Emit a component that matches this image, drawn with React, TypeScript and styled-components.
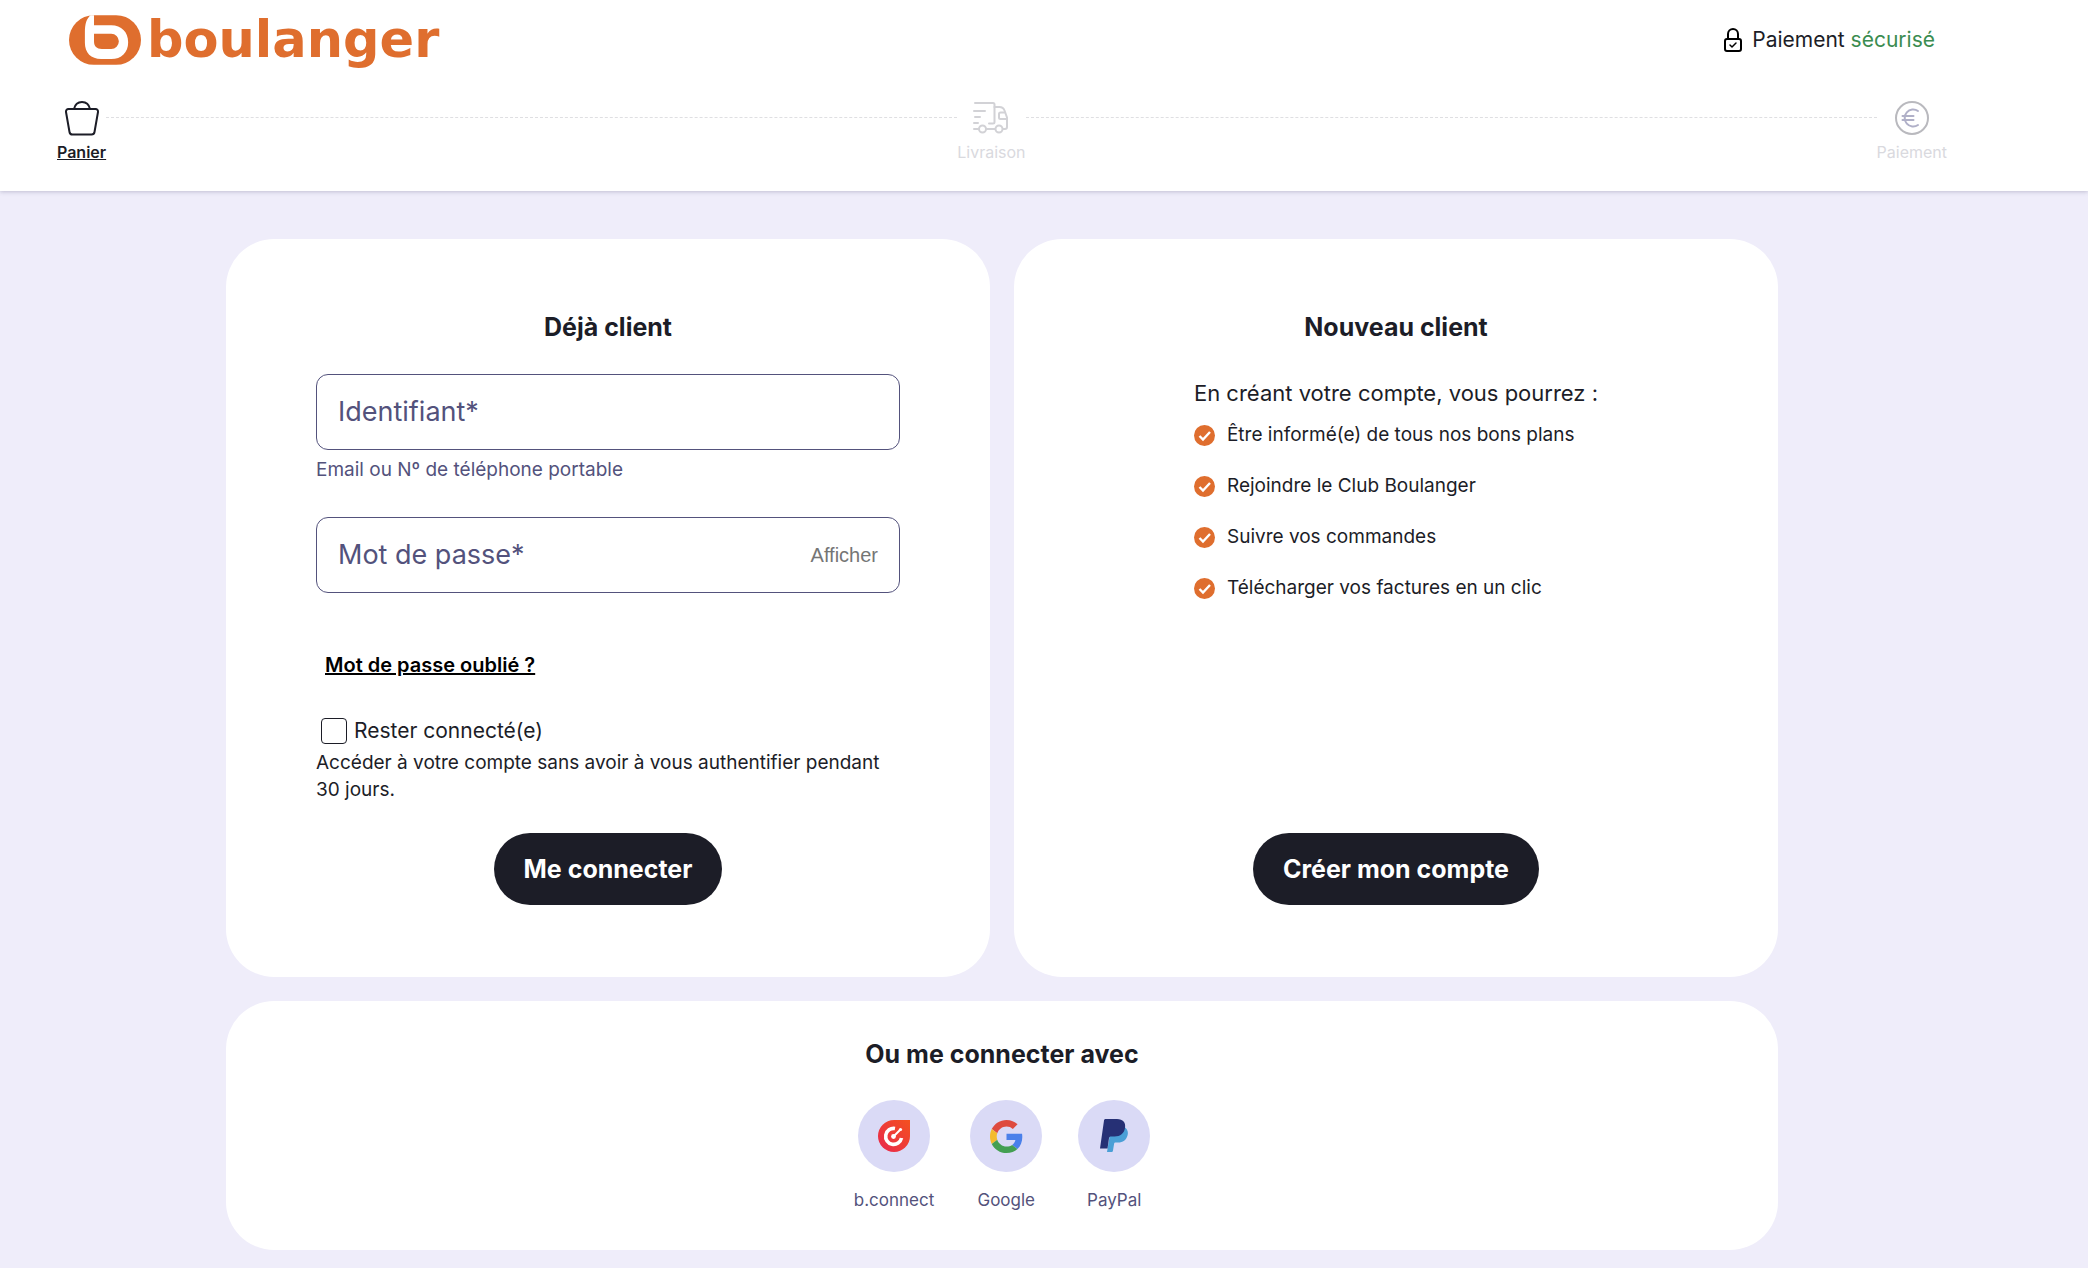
import React, { useState } from "react";
import styled, { createGlobalStyle } from "styled-components";

const ink = "#1c1d27";
const muted = "#53527c";
const orange = "#df6e2e";
const lilac = "#efedfa";

const GlobalStyle = createGlobalStyle`
  * { box-sizing: border-box; }
  body {
    margin: 0;
    background: ${lilac};
    color: ${ink};
    font-family: Inter, "Noto Sans", sans-serif;
  }
  h1, h2, p, ul, ol { margin: 0; padding: 0; }
  button, input { font-family: inherit; }
`;

const Page = styled.div`
  min-height: 100vh;
  padding-bottom: 16px;
`;

const Header = styled.header`
  background: #fff;
  padding-right: 84px;
  box-shadow: 0 1px 4px rgba(60, 55, 100, 0.25);
`;

const TopBar = styled.div`
  display: flex;
  justify-content: space-between;
  align-items: center;
  height: 80px;
  padding: 0 69px;
`;

const Logo = styled.a`
  display: flex;
  align-items: center;
  gap: 6px;
  color: ${orange};
  text-decoration: none;
`;

const Wordmark = styled.span`
  font: bold 51px/56px "DejaVu Sans", sans-serif;
`;

const Secure = styled.p`
  display: flex;
  align-items: center;
  gap: 10px;
  font-size: 21px;
  line-height: 24px;
`;

const Green = styled.span`
  color: #3b8c50;
`;

const Steps = styled.ol`
  display: flex;
  height: 111px;
  padding: 20px 57px 0;
  list-style: none;
`;

const Step = styled.li<{ $last?: boolean }>`
  display: flex;
  flex: ${(p) => (p.$last ? "none" : "1 1 auto")};
`;

const StepLink = styled.a<{ $active?: boolean }>`
  display: flex;
  flex-direction: column;
  align-items: center;
  gap: 6px;
  font-size: 16px;
  line-height: 20px;
  font-weight: ${(p) => (p.$active ? 600 : 400)};
  color: ${(p) => (p.$active ? ink : "#d9d9de")};
  text-decoration: ${(p) => (p.$active ? "underline" : "none")};
`;

const StepLine = styled.span`
  flex: 1;
  height: 18px;
  border-bottom: 1px dashed #dfdfe2;
`;

const Main = styled.main`
  padding: 48px 84px 0 0;
`;

const Cards = styled.div`
  display: grid;
  grid-template-columns: 1fr 1fr;
  gap: 24px;
  max-width: 1552px;
  margin: 0 auto;
`;

const Card = styled.section<{ $wide?: boolean }>`
  display: flex;
  flex-direction: column;
  align-items: center;
  grid-column: ${(p) => (p.$wide ? "1 / -1" : "auto")};
  padding: ${(p) => (p.$wide ? "37px 90px 38px" : "72px 90px")};
  border-radius: 48px;
  background: #fff;
`;

const Title = styled.h2`
  font-size: 25px;
  line-height: 32px;
  font-weight: 700;
`;

const Form = styled.form`
  display: flex;
  flex-direction: column;
  width: 100%;
  flex: 1;
`;

const Field = styled.div`
  display: flex;
  align-items: center;
  height: 76px;
  margin-top: 31px;
  padding: 0 21px;
  border: 1px solid ${muted};
  border-radius: 12px;
`;

const FieldInput = styled.input`
  flex: 1;
  min-width: 0;
  padding: 0;
  border: 0;
  outline: 0;
  background: none;
  color: ${ink};
  font-size: 27px;
  line-height: 32px;
  &::placeholder { color: ${muted}; opacity: 1; }
`;

const ShowButton = styled.button`
  padding: 0;
  border: 0;
  background: none;
  color: #757575;
  font: 20px/24px "Liberation Sans", Arial, sans-serif;
`;

const Hint = styled.label`
  margin-top: 6px;
  padding-bottom: 2px;
  color: ${muted};
  font-size: 19px;
  line-height: 28px;
`;

const Forgot = styled.a`
  align-self: flex-start;
  margin: 60px 0 0 9px;
  color: #000;
  font-size: 20px;
  line-height: 24px;
  font-weight: 600;
`;

const Remember = styled.label`
  display: flex;
  align-items: center;
  gap: 7px;
  margin: 40px 0 0 5px;
  font-size: 21px;
  line-height: 28px;
`;

const Box = styled.input`
  appearance: none;
  width: 26px;
  height: 26px;
  margin: 0;
  border: 1px solid ${ink};
  border-radius: 4px;
  background: #fff;
  &:checked { background: ${ink}; }
`;

const Note = styled.p`
  margin: 4px 0 30px;
  font-size: 19px;
  line-height: 27px;
`;

const Pill = styled.button`
  align-self: center;
  height: 72px;
  margin-top: auto;
  padding: 0 30px;
  border: 0;
  border-radius: 36px;
  background: ${ink};
  color: #fff;
  font-size: 25px;
  line-height: 32px;
  font-weight: 700;
`;

const Benefits = styled.div`
  margin-top: 34px;
`;

const Lead = styled.p`
  font-size: 22px;
  line-height: 32px;
`;

const List = styled.ul`
  list-style: none;
`;

const Item = styled.li`
  display: flex;
  align-items: center;
  gap: 12px;
  margin-top: 14px;
  font-size: 19px;
  line-height: 24px;
  & + & { margin-top: 27px; }
`;

const Providers = styled.div`
  display: flex;
  gap: 36px;
  margin-top: 30px;
`;

const Provider = styled.button`
  display: flex;
  flex-direction: column;
  align-items: center;
  gap: 16px;
  min-width: 72px;
  padding: 0;
  border: 0;
  background: none;
  color: ${muted};
  font-size: 17px;
  line-height: 24px;
`;

const Disc = styled.span`
  display: grid;
  place-items: center;
  width: 72px;
  height: 72px;
  border-radius: 50%;
  background: #dadaf6;
`;

const Emblem = () => (
  <svg width="72" height="50" viewBox="0 0 213 147" aria-hidden="true">
    <rect width="213" height="147" rx="73.500" fill={orange} />
    <path d="M64 0H74V30H125C155 30 175 50 175 80C175 110 155 130 125 130H95C65 130 47 112 47 82V50C47 25 52 10 64 0Z" fill="#fff" />
    <path d="M74 55H125A22 22 0 0 1 125 100H97C82 100 74 92 74 78Z" fill={orange} />
  </svg>
);

const Lock = () => (
  <svg width="18" height="24" viewBox="0 0 18 24" fill="none" stroke="#000" strokeWidth="2" strokeLinecap="round" strokeLinejoin="round" aria-hidden="true">
    <path d="M4 11V6a5 5 0 0 1 10 0v5" />
    <rect x="1" y="11" width="16" height="12" rx="2" />
    <path d="M6 17l2 2 4-4" strokeWidth="1.500" />
  </svg>
);

const Basket = () => (
  <svg width="36" height="36" viewBox="0 0 36 36" fill="none" stroke={ink} strokeWidth="2" strokeLinejoin="round" aria-hidden="true">
    <path d="M4.500 9h27a2.500 2.500 0 0 1 2.500 3l-3.500 20a3 3 0 0 1-3 2.500h-19a3 3 0 0 1-3-2.500L2 12a2.500 2.500 0 0 1 2.500-3Z" />
    <path d="M10 9c1-4.500 4-7 8-7s7 2.500 8 7" />
  </svg>
);

const Truck = () => (
  <svg width="36" height="36" viewBox="0 0 36 36" fill="none" stroke="#d2d2d6" strokeWidth="2" strokeLinecap="round" strokeLinejoin="round" aria-hidden="true">
    <path d="M2 3h18a1.500 1.500 0 0 1 1.500 1.500V22a1.500 1.500 0 0 1-1.500 1.500h-4" />
    <path d="M1 11h11M2 17h5M1 23h4M1 29h5M13 29h9" />
    <path d="M21.500 7h5c2.500 0 4 1 5 3.500l2.500 7V27a2 2 0 0 1-2 2h-2" />
    <path d="M33 19h-5.500a1.500 1.500 0 0 1-1.500-1.500V14a1.500 1.500 0 0 1 1.500-1.500h4" />
    <circle cx="9.500" cy="29" r="3.500" />
    <circle cx="26" cy="29" r="3.500" />
  </svg>
);

const Euro = () => (
  <svg width="36" height="36" viewBox="0 0 36 36" fill="none" stroke="#b0b0c8" strokeWidth="2" strokeLinecap="round" aria-hidden="true">
    <circle cx="18" cy="18" r="16" stroke="#b9b9be" />
    <path d="M24 11a8.500 8.500 0 1 0 0 14M8.500 16h11M8.500 20h11" />
  </svg>
);

const Check = () => (
  <svg width="21" height="21" viewBox="0 0 21 21" fill="none" aria-hidden="true">
    <circle cx="10.500" cy="10.500" r="10.500" fill={orange} />
    <path d="M5.500 11l3.500 3.500 7-7.500" stroke="#fff" strokeWidth="2.400" />
  </svg>
);

const BConnect = () => (
  <svg width="32" height="32" viewBox="0 0 32 32" fill="none" aria-hidden="true">
    <defs>
      <linearGradient id="bc" x1="0" y1="1" x2="1" y2="0">
        <stop offset="0" stopColor="#e8274f" />
        <stop offset="1" stopColor="#f4511e" />
      </linearGradient>
    </defs>
    <path d="M16 0H32V16A16 16 0 1 1 16 0Z" fill="url(#bc)" />
    <path d="M17 8.500A8 8 0 1 0 23.500 18" stroke="#fff" strokeWidth="3.600" />
    <path d="M15.500 16.500L22.500 9.500" stroke="#fff" strokeWidth="2" />
    <circle cx="15.500" cy="16.500" r="2.400" fill="#fff" />
    <circle cx="22.500" cy="9.500" r="1.600" fill="#fff" />
  </svg>
);

const Google = () => (
  <svg width="33" height="33" viewBox="0 0 48 48" aria-hidden="true">
    <path fill="#de4b3f" d="M24 9.500c3.540 0 6.710 1.220 9.210 3.600l6.850-6.850C35.900 2.380 30.470 0 24 0 14.620 0 6.510 5.380 2.560 13.220l7.980 6.190C12.430 13.720 17.740 9.500 24 9.500z" />
    <path fill="#4a80ea" d="M46.980 24.550c0-1.570-.15-3.090-.38-4.550H24v9.020h12.940c-.58 2.960-2.260 5.480-4.780 7.180l7.730 6c4.510-4.180 7.090-10.360 7.090-17.650z" />
    <path fill="#f4bb2c" d="M10.530 28.590c-.48-1.450-.76-2.990-.76-4.590s.27-3.140.76-4.590l-7.980-6.190C.92 16.460 0 20.120 0 24c0 3.880.92 7.540 2.560 10.780l7.970-6.190z" />
    <path fill="#439f52" d="M24 48c6.480 0 11.930-2.130 15.890-5.810l-7.730-6c-2.150 1.450-4.920 2.300-8.160 2.300-6.260 0-11.570-4.220-13.470-9.910l-7.980 6.190C6.510 42.620 14.620 48 24 48z" />
  </svg>
);

const PayPal = () => (
  <svg width="28" height="34" viewBox="0 0 28 34" aria-hidden="true">
    <path fill="#4a9fd6" d="M24.500 8c3 2 4 5 3 8.500-1.200 4.500-4.500 7-9.500 7h-2.500c-.8 0-1.200.5-1.400 1.200L13 31.500c-.2 1-.7 1.500-1.700 1.500H7l3-18Z" />
    <path fill="#263075" d="M5.500 0H17c6 0 9 3.500 8 9-1 5.500-4.500 8.500-10.500 8.500H11c-1.200 0-1.800.6-2 1.700L7.500 29.500H0L4 1.500C4.200.5 4.700 0 5.500 0Z" />
  </svg>
);

const benefits = [
  "Être informé(e) de tous nos bons plans",
  "Rejoindre le Club Boulanger",
  "Suivre vos commandes",
  "Télécharger vos factures en un clic",
];

const providers = [
  { name: "b.connect", icon: <BConnect /> },
  { name: "Google", icon: <Google /> },
  { name: "PayPal", icon: <PayPal /> },
];

const steps = [
  { name: "Panier", icon: <Basket /> },
  { name: "Livraison", icon: <Truck /> },
  { name: "Paiement", icon: <Euro /> },
];

export default function App() {
  const [visible, setVisible] = useState(false);
  return (
    <Page>
      <GlobalStyle />
      <Header>
        <TopBar>
          <Logo href="#">
            <Emblem />
            <Wordmark>boulanger</Wordmark>
          </Logo>
          <Secure>
            <Lock />
            <span>Paiement <Green>sécurisé</Green></span>
          </Secure>
        </TopBar>
        <Steps>
          {steps.map((s, i) => (
            <Step key={s.name} $last={i === steps.length - 1}>
              <StepLink href="#" $active={i === 0}>
                {s.icon}
                {s.name}
              </StepLink>
              {i < steps.length - 1 && <StepLine />}
            </Step>
          ))}
        </Steps>
      </Header>
      <Main>
        <Cards>
          <Card>
            <Title>Déjà client</Title>
            <Form onSubmit={(e) => e.preventDefault()}>
              <Field>
                <FieldInput id="login" placeholder="Identifiant*" />
              </Field>
              <Hint htmlFor="login">Email ou Nº de téléphone portable</Hint>
              <Field>
                <FieldInput type={visible ? "text" : "password"} aria-label="Mot de passe" placeholder="Mot de passe*" />
                <ShowButton type="button" onClick={() => setVisible(!visible)}>Afficher</ShowButton>
              </Field>
              <Forgot href="#">Mot de passe oublié ?</Forgot>
              <Remember>
                <Box type="checkbox" />
                Rester connecté(e)
              </Remember>
              <Note>Accéder à votre compte sans avoir à vous authentifier pendant 30 jours.</Note>
              <Pill type="submit">Me connecter</Pill>
            </Form>
          </Card>
          <Card>
            <Title>Nouveau client</Title>
            <Benefits>
              <Lead>En créant votre compte, vous pourrez :</Lead>
              <List>
                {benefits.map((b) => (
                  <Item key={b}><Check />{b}</Item>
                ))}
              </List>
            </Benefits>
            <Pill type="button">Créer mon compte</Pill>
          </Card>
          <Card $wide>
            <Title>Ou me connecter avec</Title>
            <Providers>
              {providers.map((p) => (
                <Provider key={p.name} type="button">
                  <Disc>{p.icon}</Disc>
                  {p.name}
                </Provider>
              ))}
            </Providers>
          </Card>
        </Cards>
      </Main>
    </Page>
  );
}
